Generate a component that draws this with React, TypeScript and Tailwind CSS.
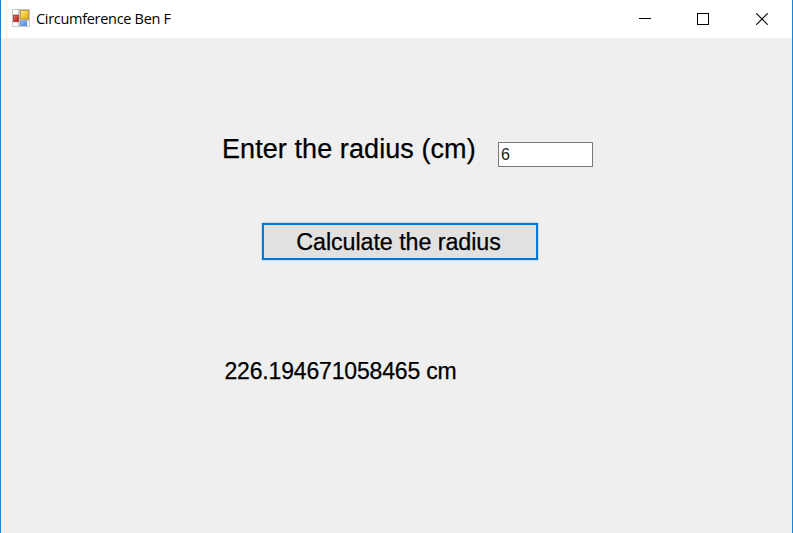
import { useState } from "react";

function AppIcon() {
  return (
    <svg width="18" height="18" viewBox="0 0 18 18" className="shrink-0">
      <defs>
        <linearGradient id="gold" x1="0" y1="0" x2="1" y2="1">
          <stop offset="0" stopColor="#fff0a0" />
          <stop offset="0.5" stopColor="#f8cb3c" />
          <stop offset="1" stopColor="#dfa514" />
        </linearGradient>
        <linearGradient id="red" x1="0" y1="0" x2="1" y2="1">
          <stop offset="0" stopColor="#e07a6c" />
          <stop offset="1" stopColor="#a81408" />
        </linearGradient>
        <linearGradient id="blue" x1="0" y1="0" x2="1" y2="1">
          <stop offset="0" stopColor="#a9cdfb" />
          <stop offset="1" stopColor="#3d7be0" />
        </linearGradient>
      </defs>
      <rect width="18" height="18" rx="1" fill="#c6c6c6" />
      <rect x="1" y="1" width="5" height="4" fill="#fff" />
      <rect x="1" y="13.5" width="5" height="3.5" fill="#fff" />
      <rect x="15.5" y="12" width="1.5" height="5" fill="#fff" />
      <rect x="8.5" y="1.5" width="8" height="8.5" fill="url(#gold)" stroke="#c9962b" />
      <rect x="1.5" y="6.5" width="5" height="6" fill="url(#red)" stroke="#b9473c" />
      <rect x="8.5" y="12" width="6" height="4.5" fill="url(#blue)" stroke="#6d9be0" />
    </svg>
  );
}

function CaptionButtons() {
  return (
    <div className="flex text-black">
      <button aria-label="Minimize" className="flex h-[38px] w-[58px] items-center justify-center">
        <svg width="12" height="12" shapeRendering="crispEdges">
          <rect y="5" width="12" height="1" />
        </svg>
      </button>
      <button aria-label="Maximize" className="flex h-[38px] w-[58px] items-center justify-center">
        <svg width="12" height="12" shapeRendering="crispEdges">
          <rect x="0.5" y="0.5" width="11" height="11" fill="none" stroke="black" />
        </svg>
      </button>
      <button aria-label="Close" className="flex h-[38px] w-[60px] items-center justify-center">
        <svg width="12" height="12">
          <path d="M0.3 0.3L11.7 11.7M11.7 0.3L0.3 11.7" stroke="black" strokeWidth="1.1" />
        </svg>
      </button>
    </div>
  );
}

export default function App() {
  const [radius, setRadius] = useState("6");
  return (
    <div className="flex h-[533px] w-[793px] flex-col overflow-hidden border-x border-[#1883d7] bg-[#efefef] font-['Liberation_Sans',Arial,sans-serif] text-black">
      <header className="flex h-[38px] shrink-0 items-center justify-between bg-white pl-[11px]">
        <div className="flex h-[36px] items-center gap-[6px] self-start">
          <AppIcon />
          <h1 className="whitespace-nowrap pt-[2px] font-['Open_Sans',sans-serif] text-[14.5px] leading-5 tracking-[-0.3px]">
            Circumference Ben F
          </h1>
        </div>
        <CaptionButtons />
      </header>
      <main className="flex flex-col items-start">
        <div className="mt-[95px] ml-[221px] flex h-[34px] items-start">
          <label
            htmlFor="radius"
            className="w-[276px] whitespace-nowrap text-[27px] leading-8 tracking-[0.08px] [-webkit-text-stroke:0.25px_black]"
          >
            Enter the radius (cm)
          </label>
          <input
            id="radius"
            value={radius}
            onChange={(e) => setRadius(e.target.value)}
            className="mt-[9px] h-[25px] w-[95px] border border-[#7a7a7a] bg-white px-[2px] text-[16px] text-[#222] outline-none"
          />
        </div>
        <button className="mt-[56px] ml-[261px] flex h-[37px] w-[276px] items-center justify-center whitespace-nowrap border-2 border-[#0078d7] bg-[#e1e1e1] pt-px pr-[3px] text-[23.3px] leading-8 tracking-[-0.07px] shadow-[0_0_1px_#0078d7] [-webkit-text-stroke:0.25px_black]">
          Calculate the radius
        </button>
        <output className="mt-[95px] ml-[223.5px] whitespace-nowrap text-[23px] leading-8 tracking-[-0.17px] [-webkit-text-stroke:0.25px_black]">
          226.194671058465 cm
        </output>
      </main>
    </div>
  );
}
